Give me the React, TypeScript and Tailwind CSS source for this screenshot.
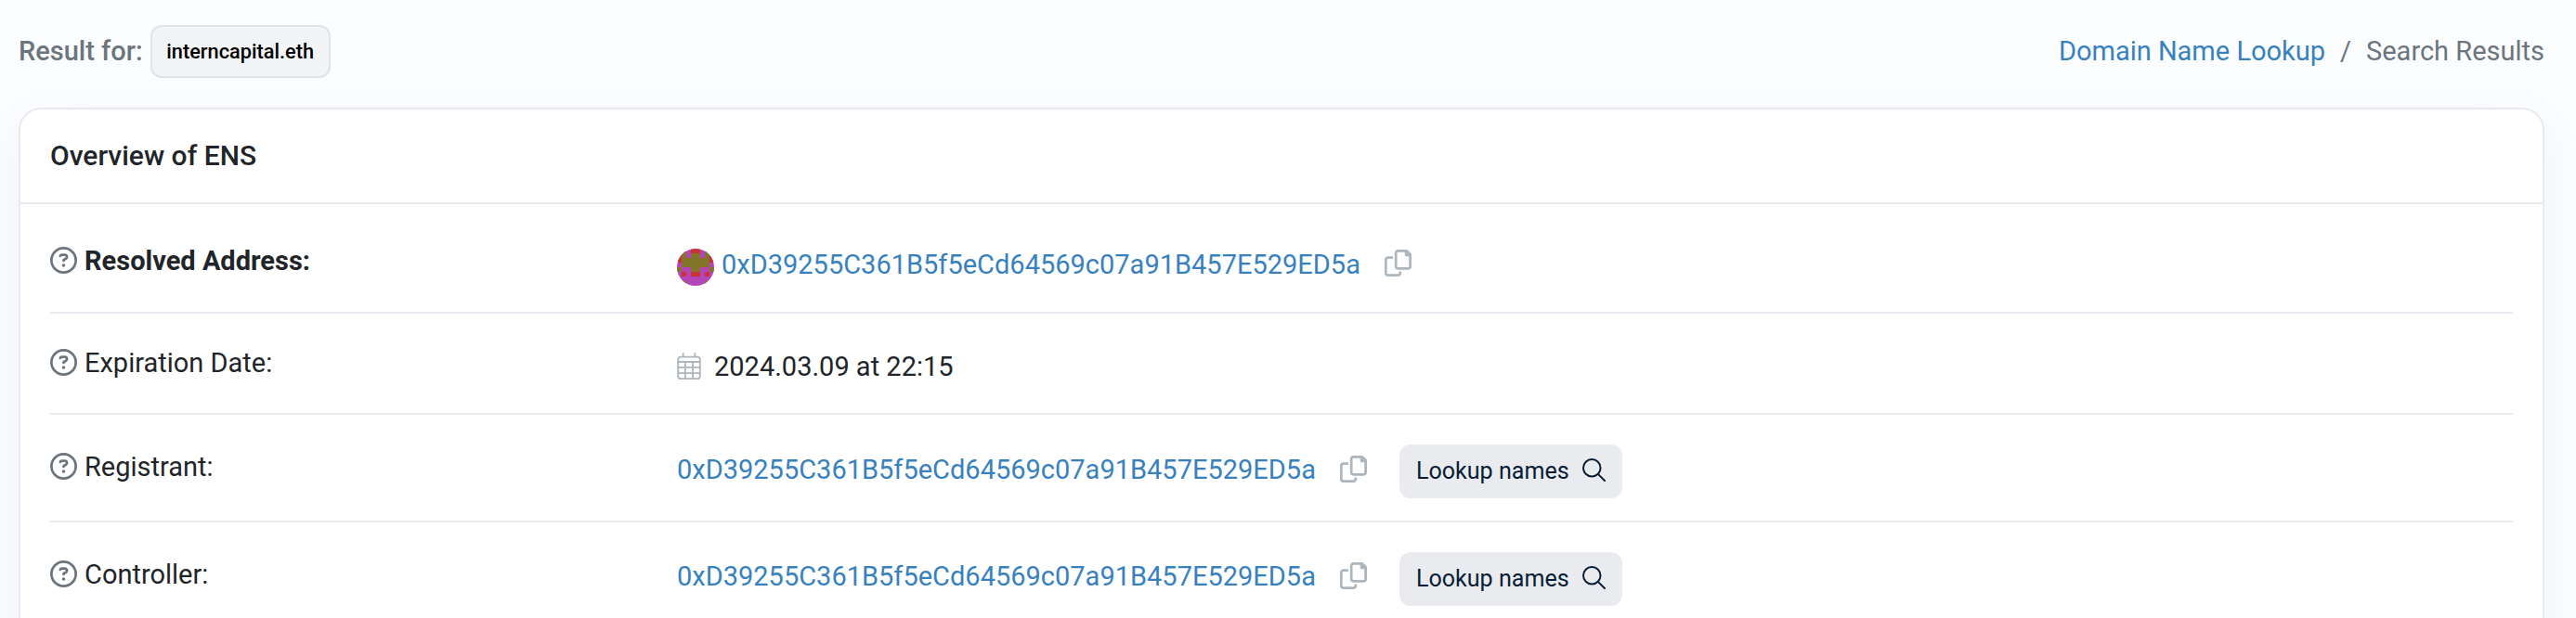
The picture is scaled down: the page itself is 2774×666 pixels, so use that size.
import { ReactNode } from "react";
import { FaRegCircleQuestion } from "react-icons/fa6";

const ADDRESS = "0xD39255C361B5f5eCd64569c07a91B457E529ED5a";

function CopyIcon() {
  return (
    <svg className="size-[29px] shrink-0 text-[#adb5bd]" viewBox="0 0 512 512" fill="currentColor">
      <path d="M502.6 70.63l-61.25-61.25C435.4 3.371 427.2 0 418.7 0H255.1c-35.35 0-64 28.66-64 64l.0195 256C192 355.4 220.7 384 256 384h192c35.2 0 64-28.8 64-64V93.25C512 84.77 508.6 76.63 502.6 70.63zM464 320c0 8.836-7.164 16-16 16H255.1c-8.838 0-16-7.164-16-16L239.1 64.13c0-8.836 7.164-16 16-16h128L384 96c0 17.67 14.33 32 32 32h47.1V320zM272 448c0 8.836-7.164 16-16 16H63.1c-8.838 0-16-7.164-16-16L47.98 192.1c0-8.836 7.164-16 16-16H160V128H63.99c-35.35 0-64 28.65-64 64l.0098 256C.002 483.3 28.66 512 64 512h192c35.2 0 64-28.8 64-64v-32h-47.1L272 448z" />
    </svg>
  );
}

function CalendarIcon() {
  return (
    <svg
      className="h-[29px] w-[26px] shrink-0 text-[#adb5bd]"
      viewBox="0 0 448 512"
      fill="none"
      stroke="currentColor"
      strokeWidth="32"
      strokeLinecap="round"
    >
      <rect x="16" y="80" width="416" height="416" rx="48" />
      <path d="M112 16v56M336 16v56M16 176h416M16 280h416M16 392h416M152 180v312M296 180v312" />
    </svg>
  );
}

function SearchIcon() {
  return (
    <svg
      className="-mt-[3px] size-[25px] shrink-0"
      viewBox="0 0 512 512"
      fill="none"
      stroke="currentColor"
      strokeWidth="40"
      strokeLinecap="round"
    >
      <circle cx="210" cy="210" r="190" />
      <path d="M345 345L492 492" />
    </svg>
  );
}

function Avatar() {
  return (
    <svg className="size-10 shrink-0 rounded-full" viewBox="0 0 8 8" shapeRendering="crispEdges">
      <rect width="8" height="8" fill="#b445b8" />
      <path d="M0 1h1v2H0zM7 1h1v2H7zM3 0h2v1H3zM1 5h1v1H1zM6 5h1v1H6zM3 5h2v1H3z" fill="#cb333b" />
      <path
        d="M1 0h1v2H1zM6 0h1v2H6zM3 1h2v1H3zM1 2h6v2H1zM0 4h1v1H0zM7 4h1v1H7zM3 4h2v1H3zM1 7h1v1H1zM6 7h1v1H6z"
        fill="#827529"
      />
    </svg>
  );
}

function LookupButton() {
  return (
    <button className="ml-[35px] flex h-[58px] w-[240px] items-center justify-between rounded-xl bg-[#e9ebef] pr-[18px] pl-[18px] text-[25.1px] text-[#081d35]">
      <span>Lookup names</span>
      <SearchIcon />
    </button>
  );
}

type RowProps = { label: ReactNode; className: string; labelClass: string; children: ReactNode };

function Row({ label, className, labelClass, children }: RowProps) {
  return (
    <div className={`flex items-start border-[#e9eaef] ${className}`}>
      <div className={`flex w-[675px] items-center gap-[8px] ${labelClass}`}>
        <FaRegCircleQuestion className="size-[29px] shrink-0 text-[#6c757d]" />
        <span className="mt-px -mb-px h-[44px]">{label}</span>
      </div>
      {children}
    </div>
  );
}

export default function App() {
  return (
    <div className="h-[666px] overflow-hidden bg-[#fcfdff] pr-[34px] pl-5 font-[Roboto,sans-serif] text-[29px] leading-[44px] text-[#212529]">
      <header className="flex h-[116px] items-start justify-between pt-[27px] text-[#6c757d]">
        <div className="flex items-center">
          <span className="-mt-px font-medium">Result for:</span>
          <span className="ml-2 flex h-[57px] w-[194px] items-center justify-center rounded-xl border-2 border-[#e1e3e6] bg-[#f3f4f6] text-[21.75px] font-medium text-black">
            interncapital.eth
          </span>
        </div>
        <nav className="flex items-center pt-[6px]">
          <a className="text-[#3881bf]">Domain Name Lookup</a>
          <span className="px-4">/</span>
          <span>Search Results</span>
        </nav>
      </header>
      <main className="h-[700px] rounded-3xl border-2 border-[#e9eaef] bg-white shadow-[0_16px_48px_rgba(189,197,209,0.2)]">
        <h2 className="flex h-[102px] items-center border-b-2 border-[#e9eaef] px-8 text-[30px] font-medium">Overview of ENS</h2>
        <div className="px-8">
          <Row
            label={<span className="font-bold">Resolved Address:</span>}
            className="h-[118px] border-b-2"
            labelClass="pt-[38px]"
          >
            <div className="flex items-start pt-[43px]">
              <span className="pt-[5px]"><Avatar /></span>
              <a className="ml-2 text-[#3881bf]">{ADDRESS}</a>
              <span className="ml-[26px] pt-[6px]"><CopyIcon /></span>
            </div>
          </Row>
          <Row label="Expiration Date:" className="h-[109px] border-b-2" labelClass="pt-[30px]">
            <div className="flex items-start pt-[35px]">
              <span className="pt-[7px]"><CalendarIcon /></span>
              <span className="ml-[14px]">2024.03.09 at 22:15</span>
            </div>
          </Row>
          <Row label="Registrant:" className="h-[116px] border-b-2" labelClass="pt-[33px]">
            <div className="flex items-start pt-[32px]">
              <a className="mt-[5px] text-[#3881bf]">{ADDRESS}</a>
              <span className="ml-[26px] pt-[12px]"><CopyIcon /></span>
              <LookupButton />
            </div>
          </Row>
          <Row label="Controller:" className="h-[116px]" labelClass="pt-[33px]">
            <div className="flex items-start pt-[32px]">
              <a className="mt-[4px] text-[#3881bf]">{ADDRESS}</a>
              <span className="ml-[26px] pt-[11px]"><CopyIcon /></span>
              <LookupButton />
            </div>
          </Row>
        </div>
      </main>
    </div>
  );
}
